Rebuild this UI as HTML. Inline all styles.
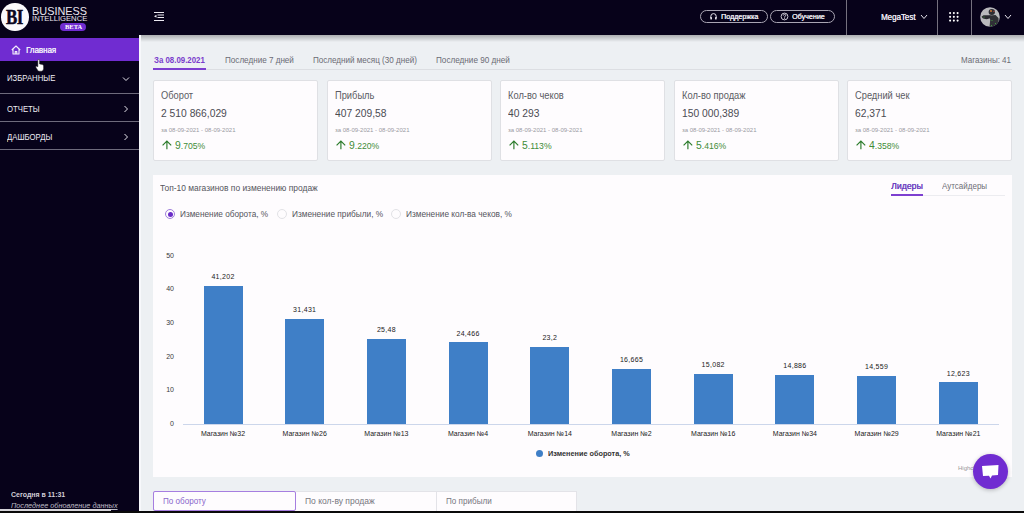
<!DOCTYPE html>
<html><head><meta charset="utf-8">
<style>
*{margin:0;padding:0;box-sizing:border-box}
html,body{width:1024px;height:513px;overflow:hidden;background:#edf0f3;font-family:"Liberation Sans",sans-serif;position:relative}
.a{position:absolute;white-space:nowrap;line-height:1;transform-origin:0 0}
.r{position:absolute}
</style></head><body>
<div class="r" style="left:0px;top:0px;width:1024px;height:35px;background:#07021a;"></div>
<div class="r" style="left:0px;top:0px;width:139px;height:513px;background:#07021a;"></div>
<div class="r" style="left:139px;top:35px;width:2px;height:478px;background:#f7f8fb;"></div>
<div class="r" style="left:141px;top:35px;width:883px;height:7px;background:linear-gradient(rgba(0,0,0,.28),rgba(0,0,0,0));"></div>
<div class="r" style="left:1px;top:3px;width:27.5px;height:27.5px;background:#fbf9fc;border-radius:50%"></div>
<div class="a" style="left:5.7px;top:6.67px;font-size:20px;color:#0b0620;font-weight:bold;transform:scaleX(0.84);font-family:'Liberation Serif',serif;letter-spacing:-0.5px;-webkit-text-stroke:0.5px #0b0620;">BI</div>
<div class="a" style="left:32px;top:5.69px;font-size:11px;color:#e9e6ef;font-weight:normal;transform:scaleX(0.99);">BUSINESS</div>
<div class="a" style="left:32px;top:15.15px;font-size:7.5px;color:#e9e6ef;font-weight:normal;transform:scaleX(1.02);">INTELLIGENCE</div>
<div class="r" style="left:60px;top:23px;width:26px;height:8px;background:#702cd1;border-radius:4px"></div>
<div class="a" style="left:64.5px;top:23.67px;font-size:7px;color:#fff;font-weight:bold;transform:scaleX(0.93);font-family:'Liberation Serif',serif;">BETA</div>
<div class="r" style="left:0px;top:38px;width:139px;height:23px;background:#702cd1;"></div>
<svg class="r" style="left:10.5px;top:45px" width="10" height="10" viewBox="0 0 10 10"><path d="M0.8 5 L5 1 L9.2 5 M2 3.9 V9 H8 V3.9 M4.2 9 V6.6 H5.8 V9" fill="none" stroke="#f3eefb" stroke-width="1.1" stroke-linejoin="round"/></svg>
<svg class="r" style="left:35px;top:58.6px" width="9.8" height="13" viewBox="0 0 12 16"><path d="M3.5 1.5 Q3.5 0.5 4.5 0.5 Q5.5 0.5 5.5 1.5 V6 L9 6.8 Q10.5 7.2 10.5 8.5 V12 Q10.5 14.5 8 15 H5.5 Q4 15 3 13.5 L1 10 Q0.6 9 1.6 8.8 L3.5 9.5 Z" fill="#fff" stroke="#222" stroke-width="0.6"/></svg>
<div class="a" style="left:26px;top:45.58px;font-size:9px;color:#f3eefb;font-weight:normal;transform:scaleX(0.88);text-shadow:0.25px 0 0 #f3eefb;">Главная</div>
<div class="a" style="left:7px;top:73.88px;font-size:9px;color:#eeecf3;font-weight:normal;transform:scaleX(0.86);">ИЗБРАННЫЕ</div>
<svg class="r" style="left:122px;top:76px" width="8" height="6" viewBox="0 0 8 6"><path d="M1 1.5 L4 4.5 L7 1.5" fill="none" stroke="#e6e4ec" stroke-width="1"/></svg>
<div class="r" style="left:0px;top:93px;width:139px;height:1px;background:#6e6b7c;"></div>
<div class="a" style="left:7px;top:104.98px;font-size:9px;color:#eeecf3;font-weight:normal;transform:scaleX(0.86);">ОТЧЕТЫ</div>
<svg class="r" style="left:123px;top:105px" width="6" height="8" viewBox="0 0 6 8"><path d="M1.5 1 L4.5 4 L1.5 7" fill="none" stroke="#e6e4ec" stroke-width="1"/></svg>
<div class="r" style="left:0px;top:121px;width:139px;height:1px;background:#6e6b7c;"></div>
<div class="a" style="left:7px;top:132.78px;font-size:9px;color:#eeecf3;font-weight:normal;transform:scaleX(0.86);">ДАШБОРДЫ</div>
<svg class="r" style="left:123px;top:133px" width="6" height="8" viewBox="0 0 6 8"><path d="M1.5 1 L4.5 4 L1.5 7" fill="none" stroke="#e6e4ec" stroke-width="1"/></svg>
<div class="r" style="left:0px;top:149px;width:139px;height:1px;background:#6e6b7c;"></div>
<div class="a" style="left:10.5px;top:491.45px;font-size:7.5px;color:#d2d0d8;font-weight:bold;transform:scaleX(0.93);">Сегодня в 11:31</div>
<div class="a" style="left:10.5px;top:502.25px;font-size:7.5px;color:#bdbbc4;font-weight:normal;transform:scaleX(0.973);font-style:italic;text-decoration:underline;">Последнее обновление данных</div>
<div class="r" style="left:0px;top:509px;width:111px;height:2.5px;background:#d4d3d8;"></div>
<svg class="r" style="left:154px;top:12px" width="10" height="10" viewBox="0 0 10 10"><g fill="#eceaf2"><rect x="0" y="0" width="10" height="1"/><rect x="3.5" y="2.5" width="6.5" height="1"/><rect x="3.5" y="5" width="6.5" height="1"/><rect x="0" y="8" width="10" height="1"/><path d="M0 4.2 L2.5 2.7 V5.7 Z"/></g></svg>
<div class="r" style="left:700px;top:10px;width:68px;height:13px;background:transparent;border:1px solid #a9a5b3;border-radius:7px"></div>
<div class="a" style="left:721px;top:13.25px;font-size:7.5px;color:#eceaf2;font-weight:normal;transform:scaleX(0.95);text-shadow:0.35px 0 0 #eceaf2;">Поддержка</div>
<div class="r" style="left:770px;top:10px;width:65px;height:13px;background:transparent;border:1px solid #a9a5b3;border-radius:7px"></div>
<div class="a" style="left:792px;top:13.25px;font-size:7.5px;color:#eceaf2;font-weight:normal;transform:scaleX(0.95);text-shadow:0.35px 0 0 #eceaf2;">Обучение</div>
<svg class="r" style="left:779.5px;top:12px" width="9" height="9" viewBox="0 0 9 9"><circle cx="4.5" cy="4.5" r="3.4" fill="none" stroke="#dcd9e2" stroke-width="0.9"/><path d="M3.3 3.6 Q3.4 2.4 4.5 2.4 Q5.7 2.4 5.7 3.5 Q5.7 4.3 4.6 4.7 V5.6" fill="none" stroke="#dcd9e2" stroke-width="0.9"/><circle cx="4.6" cy="6.6" r="0.5" fill="#dcd9e2"/></svg>
<svg class="r" style="left:709.5px;top:13px" width="7" height="7" viewBox="0 0 7 7"><path d="M0.8 5 V3.3 A2.7 2.7 0 0 1 6.2 3.3 V5" fill="none" stroke="#e2dfe8" stroke-width="1"/><rect x="0.3" y="4" width="1.7" height="2.4" rx="0.4" fill="#e2dfe8"/><rect x="5" y="4" width="1.7" height="2.4" rx="0.4" fill="#e2dfe8"/></svg>
<div class="r" style="left:846px;top:0px;width:1px;height:35px;background:#75717f;"></div>
<div class="r" style="left:937px;top:0px;width:1px;height:35px;background:#75717f;"></div>
<div class="r" style="left:971px;top:0px;width:1px;height:35px;background:#75717f;"></div>
<div class="a" style="left:881px;top:12.93px;font-size:9.3px;color:#eceaf2;font-weight:normal;transform:scaleX(0.855);text-shadow:0.25px 0 0 #eceaf2;">MegaTest</div>
<svg class="r" style="left:920px;top:14px" width="8" height="6" viewBox="0 0 8 6"><path d="M1 1 L4 4.5 L7 1" fill="none" stroke="#e6e4ec" stroke-width="1"/></svg>
<svg class="r" style="left:949.3px;top:11.6px" width="10" height="10" viewBox="0 0 10 10"><g fill="#fff"><circle cx="1.1" cy="1.1" r="1.05"/><circle cx="1.1" cy="4.85" r="1.05"/><circle cx="1.1" cy="8.6" r="1.05"/><circle cx="4.85" cy="1.1" r="1.05"/><circle cx="4.85" cy="4.85" r="1.05"/><circle cx="4.85" cy="8.6" r="1.05"/><circle cx="8.6" cy="1.1" r="1.05"/><circle cx="8.6" cy="4.85" r="1.05"/><circle cx="8.6" cy="8.6" r="1.05"/></g></svg>
<svg class="r" style="left:980px;top:6.5px" width="20" height="20" viewBox="0 0 20 20"><defs><clipPath id="cp"><circle cx="10" cy="10" r="9.8"/></clipPath></defs><g clip-path="url(#cp)"><rect width="20" height="20" fill="#b9b9bc"/><ellipse cx="11.8" cy="5" rx="3.2" ry="3" fill="#2d2d33"/><path d="M1.5 9.8 L3.5 8.3 L10.5 8.3 L11.5 11 L6.5 12.2 L3 11.5 Z" fill="#2a2a30"/><path d="M9.5 8.5 L15.5 8 L18.5 11 L19 20 L9.5 20 L10.2 13 Z" fill="#303036"/><circle cx="11" cy="4" r="0.9" fill="#e0803a"/><circle cx="14" cy="4.3" r="0.6" fill="#d04545"/><circle cx="4" cy="10" r="0.5" fill="#4b4"/><circle cx="12" cy="13.5" r="0.5" fill="#4b4"/><circle cx="15.5" cy="16.5" r="0.5" fill="#4b4"/><circle cx="11.5" cy="18.5" r="0.5" fill="#4b4"/></g></svg>
<svg class="r" style="left:1004px;top:14px" width="8" height="6" viewBox="0 0 8 6"><path d="M1 1 L4 4.5 L7 1" fill="none" stroke="#e6e4ec" stroke-width="1"/></svg>
<div class="r" style="left:153px;top:69px;width:859px;height:1px;background:#dcdee2;"></div>
<div class="r" style="left:153px;top:68px;width:53px;height:2px;background:#7d3fd0;"></div>
<div class="a" style="left:154px;top:55.68px;font-size:9px;color:#7a3ccc;font-weight:bold;transform:scaleX(0.874);">За 08.09.2021</div>
<div class="a" style="left:225px;top:55.68px;font-size:9px;color:#6b6b73;font-weight:normal;transform:scaleX(0.9);">Последние 7 дней</div>
<div class="a" style="left:313px;top:55.68px;font-size:9px;color:#6b6b73;font-weight:normal;transform:scaleX(0.897);">Последний месяц (30 дней)</div>
<div class="a" style="left:436px;top:55.68px;font-size:9px;color:#6b6b73;font-weight:normal;transform:scaleX(0.906);">Последние 90 дней</div>
<div class="a" style="left:960.5px;top:55.78px;font-size:9px;color:#6b6b73;font-weight:normal;transform:scaleX(0.89);">Магазины: 41</div>
<div class="r" style="left:153.0px;top:80px;width:165px;height:81px;background:#fefcfe;border:1px solid #dfe0e4;border-radius:2px"></div>
<div class="a" style="left:161px;top:90.94px;font-size:10px;color:#5b5b63;font-weight:normal;transform:scaleX(0.93);">Оборот</div>
<div class="a" style="left:161px;top:107.89px;font-size:11px;color:#4b4b53;font-weight:normal;transform:scaleX(0.936);">2 510 866,029</div>
<div class="a" style="left:161px;top:126.92px;font-size:6px;color:#9a9aa2;font-weight:normal;">за 08-09-2021 - 08-09-2021</div>
<svg class="r" style="left:162px;top:140.3px" width="10" height="10" viewBox="0 0 10 10"><path d="M4.9 9.3 V1.2 M0.6 5.3 L4.9 1 L9.2 5.3" fill="none" stroke="#2a7a2a" stroke-width="1.15"/></svg>
<div class="a" style="left:174.8px;top:139.91px;font-size:11.8px;color:#3f8c38;transform:scaleX(0.88)">9<span style="font-size:9.8px">.705%</span></div>
<div class="r" style="left:326.5px;top:80px;width:165px;height:81px;background:#fefcfe;border:1px solid #dfe0e4;border-radius:2px"></div>
<div class="a" style="left:335px;top:90.94px;font-size:10px;color:#5b5b63;font-weight:normal;transform:scaleX(0.93);">Прибыль</div>
<div class="a" style="left:335px;top:107.89px;font-size:11px;color:#4b4b53;font-weight:normal;transform:scaleX(0.936);">407 209,58</div>
<div class="a" style="left:335px;top:126.92px;font-size:6px;color:#9a9aa2;font-weight:normal;">за 08-09-2021 - 08-09-2021</div>
<svg class="r" style="left:336px;top:140.3px" width="10" height="10" viewBox="0 0 10 10"><path d="M4.9 9.3 V1.2 M0.6 5.3 L4.9 1 L9.2 5.3" fill="none" stroke="#2a7a2a" stroke-width="1.15"/></svg>
<div class="a" style="left:348.8px;top:139.91px;font-size:11.8px;color:#3f8c38;transform:scaleX(0.88)">9<span style="font-size:9.8px">.220%</span></div>
<div class="r" style="left:500.0px;top:80px;width:165px;height:81px;background:#fefcfe;border:1px solid #dfe0e4;border-radius:2px"></div>
<div class="a" style="left:508px;top:90.94px;font-size:10px;color:#5b5b63;font-weight:normal;transform:scaleX(0.93);">Кол-во чеков</div>
<div class="a" style="left:508px;top:107.89px;font-size:11px;color:#4b4b53;font-weight:normal;transform:scaleX(0.936);">40 293</div>
<div class="a" style="left:508px;top:126.92px;font-size:6px;color:#9a9aa2;font-weight:normal;">за 08-09-2021 - 08-09-2021</div>
<svg class="r" style="left:509px;top:140.3px" width="10" height="10" viewBox="0 0 10 10"><path d="M4.9 9.3 V1.2 M0.6 5.3 L4.9 1 L9.2 5.3" fill="none" stroke="#2a7a2a" stroke-width="1.15"/></svg>
<div class="a" style="left:521.8px;top:139.91px;font-size:11.8px;color:#3f8c38;transform:scaleX(0.88)">5<span style="font-size:9.8px">.113%</span></div>
<div class="r" style="left:673.5px;top:80px;width:165px;height:81px;background:#fefcfe;border:1px solid #dfe0e4;border-radius:2px"></div>
<div class="a" style="left:682px;top:90.94px;font-size:10px;color:#5b5b63;font-weight:normal;transform:scaleX(0.93);">Кол-во продаж</div>
<div class="a" style="left:682px;top:107.89px;font-size:11px;color:#4b4b53;font-weight:normal;transform:scaleX(0.936);">150 000,389</div>
<div class="a" style="left:682px;top:126.92px;font-size:6px;color:#9a9aa2;font-weight:normal;">за 08-09-2021 - 08-09-2021</div>
<svg class="r" style="left:683px;top:140.3px" width="10" height="10" viewBox="0 0 10 10"><path d="M4.9 9.3 V1.2 M0.6 5.3 L4.9 1 L9.2 5.3" fill="none" stroke="#2a7a2a" stroke-width="1.15"/></svg>
<div class="a" style="left:695.8px;top:139.91px;font-size:11.8px;color:#3f8c38;transform:scaleX(0.88)">5<span style="font-size:9.8px">.416%</span></div>
<div class="r" style="left:847.0px;top:80px;width:165px;height:81px;background:#fefcfe;border:1px solid #dfe0e4;border-radius:2px"></div>
<div class="a" style="left:855px;top:90.94px;font-size:10px;color:#5b5b63;font-weight:normal;transform:scaleX(0.93);">Средний чек</div>
<div class="a" style="left:855px;top:107.89px;font-size:11px;color:#4b4b53;font-weight:normal;transform:scaleX(0.936);">62,371</div>
<div class="a" style="left:855px;top:126.92px;font-size:6px;color:#9a9aa2;font-weight:normal;">за 08-09-2021 - 08-09-2021</div>
<svg class="r" style="left:856px;top:140.3px" width="10" height="10" viewBox="0 0 10 10"><path d="M4.9 9.3 V1.2 M0.6 5.3 L4.9 1 L9.2 5.3" fill="none" stroke="#2a7a2a" stroke-width="1.15"/></svg>
<div class="a" style="left:868.8px;top:139.91px;font-size:11.8px;color:#3f8c38;transform:scaleX(0.88)">4<span style="font-size:9.8px">.358%</span></div>
<div class="r" style="left:153px;top:175px;width:859px;height:302px;background:#fefcfe;"></div>
<div class="a" style="left:160px;top:184.18px;font-size:9px;color:#55555d;font-weight:normal;transform:scaleX(0.935);">Топ-10 магазинов по изменению продаж</div>
<div class="r" style="left:922px;top:195px;width:83px;height:1px;background:#ececf0;"></div>
<div class="r" style="left:891px;top:194px;width:31.5px;height:2px;background:#7d3fd0;"></div>
<div class="a" style="left:891px;top:181.98px;font-size:9px;color:#6c3cc0;font-weight:normal;transform:scaleX(0.97);text-shadow:0.3px 0 0 #6c3cc0;">Лидеры</div>
<div class="a" style="left:941.5px;top:181.98px;font-size:9px;color:#6e6e76;font-weight:normal;transform:scaleX(0.89);">Аутсайдеры</div>
<div class="r" style="left:165px;top:209px;width:10px;height:10px;background:transparent;border:1px solid #a07fda;border-radius:50%"></div>
<div class="r" style="left:167.5px;top:211.5px;width:5px;height:5px;background:#6a2cc8;border-radius:50%"></div>
<div class="a" style="left:180px;top:209.68px;font-size:9px;color:#55555d;font-weight:normal;transform:scaleX(0.916);">Изменение оборота, %</div>
<div class="r" style="left:277px;top:209px;width:10px;height:10px;background:transparent;border:1px solid #e2e2e6;border-radius:50%"></div>
<div class="a" style="left:291.6px;top:209.68px;font-size:9px;color:#55555d;font-weight:normal;transform:scaleX(0.92);">Изменение прибыли, %</div>
<div class="r" style="left:391px;top:209px;width:10px;height:10px;background:transparent;border:1px solid #e2e2e6;border-radius:50%"></div>
<div class="a" style="left:406px;top:209.68px;font-size:9px;color:#55555d;font-weight:normal;transform:scaleX(0.92);">Изменение кол-ва чеков, %</div>
<div class="a" style="left:150px;width:24px;text-align:right;top:251.57px;font-size:7px;color:#3a3a3a">50</div>
<div class="a" style="left:150px;width:24px;text-align:right;top:285.27px;font-size:7px;color:#3a3a3a">40</div>
<div class="a" style="left:150px;width:24px;text-align:right;top:318.97px;font-size:7px;color:#3a3a3a">30</div>
<div class="a" style="left:150px;width:24px;text-align:right;top:352.67px;font-size:7px;color:#3a3a3a">20</div>
<div class="a" style="left:150px;width:24px;text-align:right;top:386.37px;font-size:7px;color:#3a3a3a">10</div>
<div class="a" style="left:150px;width:24px;text-align:right;top:420.07px;font-size:7px;color:#3a3a3a">0</div>
<div class="r" style="left:183px;top:424px;width:816px;height:1px;background:#ccd6eb;"></div>
<div class="r" style="left:203.5px;top:285.53px;width:39px;height:138.47px;background:#3f7fc7;"></div>
<div class="a" style="left:193.00px;width:60px;text-align:center;top:272.80px;font-size:7px;color:#222;letter-spacing:0.3px">41,202</div>
<div class="a" style="left:188.00px;width:70px;text-align:center;top:430.27px;font-size:7px;color:#222">Магазин №32</div>
<div class="r" style="left:285.2px;top:318.65px;width:39px;height:105.35px;background:#3f7fc7;"></div>
<div class="a" style="left:274.70px;width:60px;text-align:center;top:305.92px;font-size:7px;color:#222;letter-spacing:0.3px">31,431</div>
<div class="a" style="left:269.70px;width:70px;text-align:center;top:430.27px;font-size:7px;color:#222">Магазин №26</div>
<div class="r" style="left:366.9px;top:338.82px;width:39px;height:85.18px;background:#3f7fc7;"></div>
<div class="a" style="left:356.40px;width:60px;text-align:center;top:326.09px;font-size:7px;color:#222;letter-spacing:0.3px">25,48</div>
<div class="a" style="left:351.40px;width:70px;text-align:center;top:430.27px;font-size:7px;color:#222">Магазин №13</div>
<div class="r" style="left:448.6px;top:342.26px;width:39px;height:81.74px;background:#3f7fc7;"></div>
<div class="a" style="left:438.10px;width:60px;text-align:center;top:329.53px;font-size:7px;color:#222;letter-spacing:0.3px">24,466</div>
<div class="a" style="left:433.10px;width:70px;text-align:center;top:430.27px;font-size:7px;color:#222">Магазин №4</div>
<div class="r" style="left:530.3px;top:346.55px;width:39px;height:77.45px;background:#3f7fc7;"></div>
<div class="a" style="left:519.80px;width:60px;text-align:center;top:333.82px;font-size:7px;color:#222;letter-spacing:0.3px">23,2</div>
<div class="a" style="left:514.80px;width:70px;text-align:center;top:430.27px;font-size:7px;color:#222">Магазин №14</div>
<div class="r" style="left:612.0px;top:368.71px;width:39px;height:55.29px;background:#3f7fc7;"></div>
<div class="a" style="left:601.50px;width:60px;text-align:center;top:355.98px;font-size:7px;color:#222;letter-spacing:0.3px">16,665</div>
<div class="a" style="left:596.50px;width:70px;text-align:center;top:430.27px;font-size:7px;color:#222">Магазин №2</div>
<div class="r" style="left:693.7px;top:374.07px;width:39px;height:49.93px;background:#3f7fc7;"></div>
<div class="a" style="left:683.20px;width:60px;text-align:center;top:361.34px;font-size:7px;color:#222;letter-spacing:0.3px">15,082</div>
<div class="a" style="left:678.20px;width:70px;text-align:center;top:430.27px;font-size:7px;color:#222">Магазин №16</div>
<div class="r" style="left:775.4px;top:374.74px;width:39px;height:49.26px;background:#3f7fc7;"></div>
<div class="a" style="left:764.90px;width:60px;text-align:center;top:362.01px;font-size:7px;color:#222;letter-spacing:0.3px">14,886</div>
<div class="a" style="left:759.90px;width:70px;text-align:center;top:430.27px;font-size:7px;color:#222">Магазин №34</div>
<div class="r" style="left:857.1px;top:375.84px;width:39px;height:48.16px;background:#3f7fc7;"></div>
<div class="a" style="left:846.60px;width:60px;text-align:center;top:363.11px;font-size:7px;color:#222;letter-spacing:0.3px">14,559</div>
<div class="a" style="left:841.60px;width:70px;text-align:center;top:430.27px;font-size:7px;color:#222">Магазин №29</div>
<div class="r" style="left:938.8px;top:382.41px;width:39px;height:41.59px;background:#3f7fc7;"></div>
<div class="a" style="left:928.30px;width:60px;text-align:center;top:369.68px;font-size:7px;color:#222;letter-spacing:0.3px">12,623</div>
<div class="a" style="left:923.30px;width:70px;text-align:center;top:430.27px;font-size:7px;color:#222">Магазин №21</div>
<div class="r" style="left:536px;top:450px;width:7px;height:7px;background:#3f7fc7;border-radius:50%"></div>
<div class="a" style="left:548px;top:450.37px;font-size:7px;color:#333;font-weight:bold;transform:scaleX(1.04);">Изменение оборота, %</div>
<div class="a" style="left:958px;top:464.92px;font-size:6px;color:#999;font-weight:normal;">Highcharts.com</div>
<div class="r" style="left:973px;top:454px;width:35px;height:35px;background:#702cd1;border-radius:50%;box-shadow:0 1px 4px rgba(0,0,0,.25)"></div>
<svg class="r" style="left:981px;top:464px" width="19" height="17" viewBox="0 0 19 17"><path d="M1 2 L17.5 1 L17 11 L11 11.5 L9.5 14.5 L8 11.8 L2 12 Z" fill="#fff"/></svg>
<div class="r" style="left:153px;top:491px;width:424px;height:22px;background:#fefcfe;border:1px solid #e3e3e8"></div>
<div class="r" style="left:153px;top:491px;width:143px;height:20px;background:#fefcfe;border:1px solid #a67ee0;border-radius:2px"></div>
<div class="r" style="left:436px;top:492px;width:1px;height:20px;background:#e3e3e8;"></div>
<div class="a" style="left:163px;top:496.88px;font-size:9px;color:#8a66cc;font-weight:normal;transform:scaleX(0.9);">По обороту</div>
<div class="a" style="left:304.5px;top:496.88px;font-size:9px;color:#77777f;font-weight:normal;transform:scaleX(0.946);">По кол-ву продаж</div>
<div class="a" style="left:446px;top:496.88px;font-size:9px;color:#77777f;font-weight:normal;transform:scaleX(0.9);">По прибыли</div>
<div class="r" style="left:0px;top:511px;width:1024px;height:2px;background:#0a0a0a;"></div>
</body></html>
